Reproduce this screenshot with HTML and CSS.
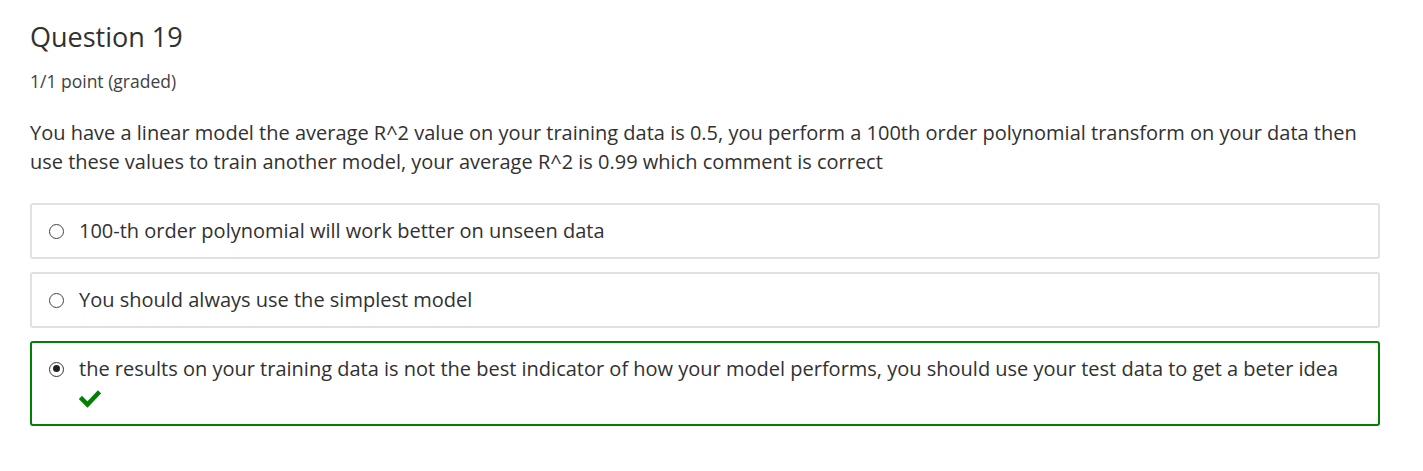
FILE: index.html
```html
<!DOCTYPE html>
<html>
<head>
<meta charset="utf-8">
<link rel="stylesheet" href="styles.css">
</head>
<body>
<div class="problem">
  <h3 class="title">Question 19</h3>
  <div class="points">1/1 point (graded)</div>
  <p class="prompt">You have a linear model the average R^2 value on your training data is 0.5, you perform a 100th order polynomial transform on your data then use these values to train another model, your average R^2 is 0.99 which comment is correct</p>
  <div class="choices">
    <label class="choice">
      <span class="radio"></span>
      <span class="text">100-th order polynomial will work better on unseen data</span>
    </label>
    <label class="choice">
      <span class="radio"></span>
      <span class="text">You should always use the simplest model</span>
    </label>
    <label class="choice correct">
      <span class="radio checked"></span>
      <span class="text">the results on your training data is not the best indicator of how your model performs, you should use your test data to get a beter idea
        <span class="check"><svg width="22" height="18" viewBox="0 0 22 18"><path d="M3 9 L8.5 14.5 L19 3.5" fill="none" stroke="#008100" stroke-width="4.5" stroke-linecap="square"/></svg></span>
      </span>
    </label>
  </div>
</div>
</body>
</html>
```
FILE: styles.css
```css
html, body {
  margin: 0;
  padding: 0;
  background: #fff;
}
body {
  font-family: "Open Sans", "Liberation Sans", sans-serif;
  color: #313131;
}
.problem {
  padding: 20px 43px 0 30px;
}
.title {
  margin: 0;
  font-size: 27px;
  font-weight: 400;
  line-height: 34px;
  color: #313131;
}
.points {
  margin-top: 15px;
  font-size: 17.5px;
  line-height: 24px;
  color: #414141;
}
.prompt {
  margin: 25px 0 0 0;
  font-size: 20px;
  line-height: 29px;
}
.choices {
  margin-top: 27px;
  display: flex;
  flex-direction: column;
  gap: 13px;
}
.choice {
  display: flex;
  align-items: flex-start;
  border: 2px solid #e1e1e1;
  border-radius: 3px;
  padding: 12px 18px 12px 17px;
  font-size: 20px;
  line-height: 28px;
}
.choice.correct {
  border-color: #008100;
}
.radio {
  flex: none;
  width: 15px;
  height: 15px;
  border: 1px solid #444;
  border-radius: 50%;
  box-sizing: border-box;
  margin: 6.5px 15px 0 0;
  position: relative;
}
.radio.checked {
  border: 1.5px solid #333;
}
.radio.checked::after {
  content: "";
  position: absolute;
  left: 2.5px;
  top: 2.5px;
  width: 7px;
  height: 7px;
  border-radius: 50%;
  background: #222;
}
.text {
  display: block;
}
.check {
  display: block;
  height: 29px;
  padding-top: 7px;
  box-sizing: border-box;
}
.check svg {
  display: block;
}
```
